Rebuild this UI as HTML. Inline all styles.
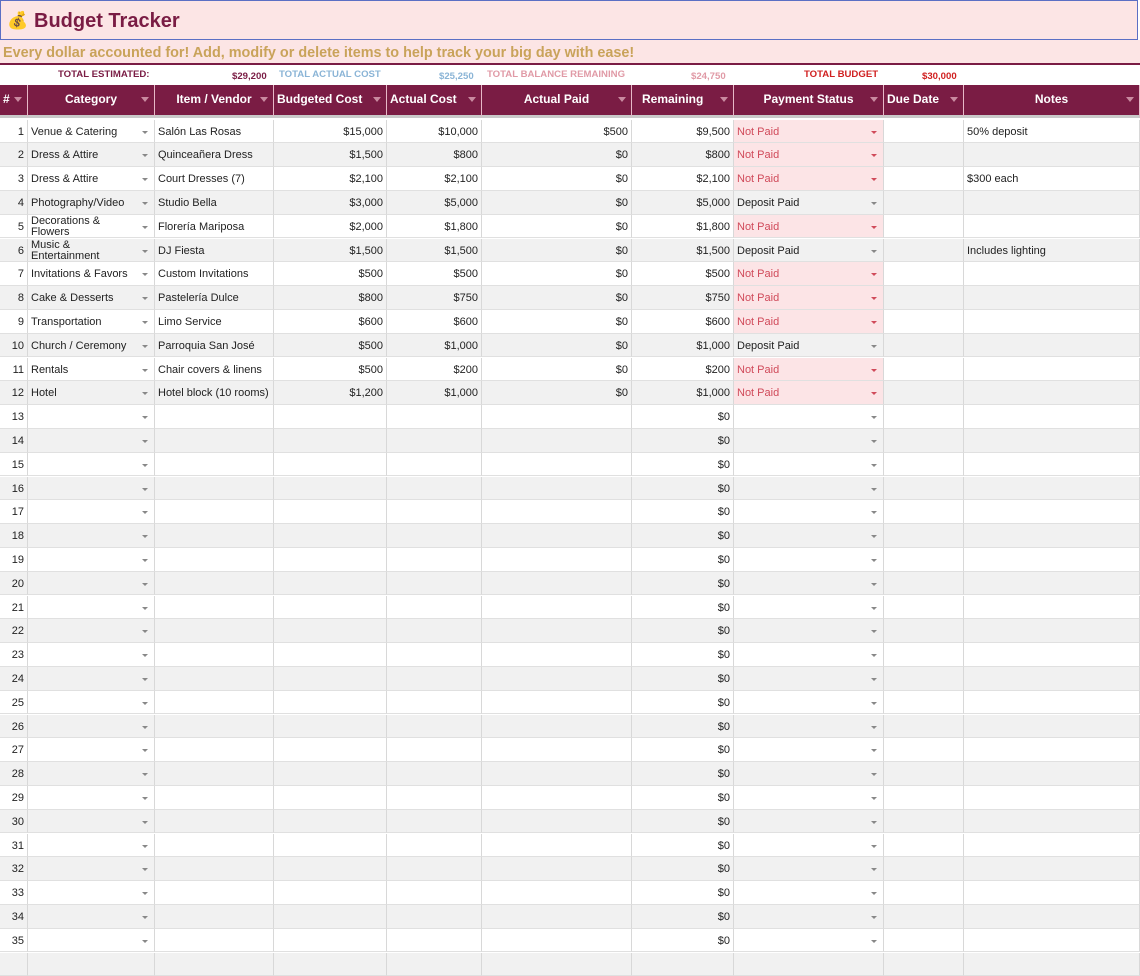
<!DOCTYPE html>
<html><head><meta charset="utf-8"><style>
*{box-sizing:border-box;margin:0;padding:0}
body{width:1140px;height:956px;overflow:hidden;background:#fff;font-family:"Liberation Sans",Arial,sans-serif;font-size:11px;color:#222;position:relative}
#title{position:absolute;left:0;top:0;width:1138px;height:40px;background:#fce5e5;border:1px solid #5b6fc4;}
#title span{position:absolute;left:33px;top:9px;font-size:20px;font-weight:bold;color:#7a1c44}
#title i{position:absolute;left:6px;top:10px;font-style:normal;font-size:17px}
#sub{position:absolute;left:0;top:40px;width:1140px;height:25px;background:#fce5e5;border-bottom:2px solid #7a1c44}
#sub span{position:absolute;left:3px;top:5px;font-size:14.4px;font-weight:bold;color:#c9a35a}
#tot{position:absolute;left:0;top:66px;width:1140px;height:18px;font-size:9.6px;font-weight:bold}
#tot div{position:absolute;top:3px}
.r{display:flex;position:absolute;left:0;width:1140px}
.r>div{flex:none;border-right:1px solid #d8d8d8;border-bottom:1px solid #e0e0e0;white-space:nowrap;overflow:hidden;padding:1px 3px 0;position:relative;line-height:23px}
.h{top:85px;height:33px;background:#7a1c44;color:#fff;font-weight:bold;font-size:12px}
.h>div{line-height:29px;text-align:center;border-right:1px solid #e7b8c7;border-bottom:3px solid #c9c9c9;padding-top:0}
.h>div:after{content:"";position:absolute;right:5px;top:12px;border:4px solid transparent;border-top:5px solid #c98aa0}
.w0{width:28px}.w1{width:127px}.w2{width:119px}.w3{width:113px}.w4{width:95px}.w5{width:150px}.w6{width:102px}.w7{width:150px}.w8{width:80px}.w9{width:176px}
.n{text-align:right}
.g{background:#f1f1f1}
.dd:after{content:"";position:absolute;right:6px;top:11px;border:3px solid transparent;border-top:3px solid #888}
.np{background:#fce4e6;color:#d04a5a}
.np:after{border-top-color:#d04a5a}
.two{line-height:11px!important;padding-top:1px!important}
</style></head><body>
<div id="title"><i>💰</i><span>Budget Tracker</span></div>
<div id="sub"><span>Every dollar accounted for! Add, modify or delete items to help track your big day with ease!</span></div>
<div id="tot">
<div style="left:58px;color:#7a1c44">TOTAL ESTIMATED:</div>
<div style="left:232px;color:#7a1c44;top:5px">$29,200</div>
<div style="left:279px;color:#8ab4d6">TOTAL ACTUAL COST</div>
<div style="left:439px;color:#8ab4d6;top:5px">$25,250</div>
<div style="left:487px;color:#e09aa6">TOTAL BALANCE REMAINING</div>
<div style="left:691px;color:#e09aa6;top:5px">$24,750</div>
<div style="left:804px;color:#d02020">TOTAL BUDGET</div>
<div style="left:922px;color:#d02020;top:5px">$30,000</div>
</div>
<div class="r h"><div class="w0" style="text-align:left">#</div><div class="w1">Category</div><div class="w2">Item / Vendor</div><div class="w3" style="text-align:left">Budgeted Cost</div><div class="w4" style="text-align:left">Actual Cost</div><div class="w5">Actual Paid</div><div class="w6" style="text-align:left;padding-left:10px">Remaining</div><div class="w7">Payment Status</div><div class="w8" style="text-align:left">Due Date</div><div class="w9">Notes</div></div>

<div class="r" style="top:119.5px;height:23.8px"><div class="w0 n">1</div><div class="w1 dd">Venue &amp; Catering</div><div class="w2">Salón Las Rosas</div><div class="w3 n">$15,000</div><div class="w4 n">$10,000</div><div class="w5 n">$500</div><div class="w6 n">$9,500</div><div class="w7 dd np">Not Paid</div><div class="w8"></div><div class="w9">50% deposit</div></div>
<div class="r g" style="top:143.3px;height:23.8px"><div class="w0 n">2</div><div class="w1 dd">Dress &amp; Attire</div><div class="w2">Quinceañera Dress</div><div class="w3 n">$1,500</div><div class="w4 n">$800</div><div class="w5 n">$0</div><div class="w6 n">$800</div><div class="w7 dd np">Not Paid</div><div class="w8"></div><div class="w9"></div></div>
<div class="r" style="top:167.1px;height:23.8px"><div class="w0 n">3</div><div class="w1 dd">Dress &amp; Attire</div><div class="w2">Court Dresses (7)</div><div class="w3 n">$2,100</div><div class="w4 n">$2,100</div><div class="w5 n">$0</div><div class="w6 n">$2,100</div><div class="w7 dd np">Not Paid</div><div class="w8"></div><div class="w9">$300 each</div></div>
<div class="r g" style="top:190.9px;height:23.8px"><div class="w0 n">4</div><div class="w1 dd">Photography/Video</div><div class="w2">Studio Bella</div><div class="w3 n">$3,000</div><div class="w4 n">$5,000</div><div class="w5 n">$0</div><div class="w6 n">$5,000</div><div class="w7 dd">Deposit Paid</div><div class="w8"></div><div class="w9"></div></div>
<div class="r" style="top:214.7px;height:23.8px"><div class="w0 n">5</div><div class="w1 dd two">Decorations &amp;<br>Flowers</div><div class="w2">Florería Mariposa</div><div class="w3 n">$2,000</div><div class="w4 n">$1,800</div><div class="w5 n">$0</div><div class="w6 n">$1,800</div><div class="w7 dd np">Not Paid</div><div class="w8"></div><div class="w9"></div></div>
<div class="r g" style="top:238.5px;height:23.8px"><div class="w0 n">6</div><div class="w1 dd two">Music &amp;<br>Entertainment</div><div class="w2">DJ Fiesta</div><div class="w3 n">$1,500</div><div class="w4 n">$1,500</div><div class="w5 n">$0</div><div class="w6 n">$1,500</div><div class="w7 dd">Deposit Paid</div><div class="w8"></div><div class="w9">Includes lighting</div></div>
<div class="r" style="top:262.3px;height:23.8px"><div class="w0 n">7</div><div class="w1 dd">Invitations &amp; Favors</div><div class="w2">Custom Invitations</div><div class="w3 n">$500</div><div class="w4 n">$500</div><div class="w5 n">$0</div><div class="w6 n">$500</div><div class="w7 dd np">Not Paid</div><div class="w8"></div><div class="w9"></div></div>
<div class="r g" style="top:286.1px;height:23.8px"><div class="w0 n">8</div><div class="w1 dd">Cake &amp; Desserts</div><div class="w2">Pastelería Dulce</div><div class="w3 n">$800</div><div class="w4 n">$750</div><div class="w5 n">$0</div><div class="w6 n">$750</div><div class="w7 dd np">Not Paid</div><div class="w8"></div><div class="w9"></div></div>
<div class="r" style="top:309.9px;height:23.8px"><div class="w0 n">9</div><div class="w1 dd">Transportation</div><div class="w2">Limo Service</div><div class="w3 n">$600</div><div class="w4 n">$600</div><div class="w5 n">$0</div><div class="w6 n">$600</div><div class="w7 dd np">Not Paid</div><div class="w8"></div><div class="w9"></div></div>
<div class="r g" style="top:333.7px;height:23.8px"><div class="w0 n">10</div><div class="w1 dd">Church / Ceremony</div><div class="w2">Parroquia San José</div><div class="w3 n">$500</div><div class="w4 n">$1,000</div><div class="w5 n">$0</div><div class="w6 n">$1,000</div><div class="w7 dd">Deposit Paid</div><div class="w8"></div><div class="w9"></div></div>
<div class="r" style="top:357.5px;height:23.8px"><div class="w0 n">11</div><div class="w1 dd">Rentals</div><div class="w2">Chair covers &amp; linens</div><div class="w3 n">$500</div><div class="w4 n">$200</div><div class="w5 n">$0</div><div class="w6 n">$200</div><div class="w7 dd np">Not Paid</div><div class="w8"></div><div class="w9"></div></div>
<div class="r g" style="top:381.3px;height:23.8px"><div class="w0 n">12</div><div class="w1 dd">Hotel</div><div class="w2">Hotel block (10 rooms)</div><div class="w3 n">$1,200</div><div class="w4 n">$1,000</div><div class="w5 n">$0</div><div class="w6 n">$1,000</div><div class="w7 dd np">Not Paid</div><div class="w8"></div><div class="w9"></div></div>
<div class="r" style="top:405.1px;height:23.8px"><div class="w0 n">13</div><div class="w1 dd"></div><div class="w2"></div><div class="w3"></div><div class="w4"></div><div class="w5"></div><div class="w6 n">$0</div><div class="w7 dd"></div><div class="w8"></div><div class="w9"></div></div>
<div class="r g" style="top:428.9px;height:23.8px"><div class="w0 n">14</div><div class="w1 dd"></div><div class="w2"></div><div class="w3"></div><div class="w4"></div><div class="w5"></div><div class="w6 n">$0</div><div class="w7 dd"></div><div class="w8"></div><div class="w9"></div></div>
<div class="r" style="top:452.7px;height:23.8px"><div class="w0 n">15</div><div class="w1 dd"></div><div class="w2"></div><div class="w3"></div><div class="w4"></div><div class="w5"></div><div class="w6 n">$0</div><div class="w7 dd"></div><div class="w8"></div><div class="w9"></div></div>
<div class="r g" style="top:476.5px;height:23.8px"><div class="w0 n">16</div><div class="w1 dd"></div><div class="w2"></div><div class="w3"></div><div class="w4"></div><div class="w5"></div><div class="w6 n">$0</div><div class="w7 dd"></div><div class="w8"></div><div class="w9"></div></div>
<div class="r" style="top:500.3px;height:23.8px"><div class="w0 n">17</div><div class="w1 dd"></div><div class="w2"></div><div class="w3"></div><div class="w4"></div><div class="w5"></div><div class="w6 n">$0</div><div class="w7 dd"></div><div class="w8"></div><div class="w9"></div></div>
<div class="r g" style="top:524.1px;height:23.8px"><div class="w0 n">18</div><div class="w1 dd"></div><div class="w2"></div><div class="w3"></div><div class="w4"></div><div class="w5"></div><div class="w6 n">$0</div><div class="w7 dd"></div><div class="w8"></div><div class="w9"></div></div>
<div class="r" style="top:547.9px;height:23.8px"><div class="w0 n">19</div><div class="w1 dd"></div><div class="w2"></div><div class="w3"></div><div class="w4"></div><div class="w5"></div><div class="w6 n">$0</div><div class="w7 dd"></div><div class="w8"></div><div class="w9"></div></div>
<div class="r g" style="top:571.7px;height:23.8px"><div class="w0 n">20</div><div class="w1 dd"></div><div class="w2"></div><div class="w3"></div><div class="w4"></div><div class="w5"></div><div class="w6 n">$0</div><div class="w7 dd"></div><div class="w8"></div><div class="w9"></div></div>
<div class="r" style="top:595.5px;height:23.8px"><div class="w0 n">21</div><div class="w1 dd"></div><div class="w2"></div><div class="w3"></div><div class="w4"></div><div class="w5"></div><div class="w6 n">$0</div><div class="w7 dd"></div><div class="w8"></div><div class="w9"></div></div>
<div class="r g" style="top:619.3px;height:23.8px"><div class="w0 n">22</div><div class="w1 dd"></div><div class="w2"></div><div class="w3"></div><div class="w4"></div><div class="w5"></div><div class="w6 n">$0</div><div class="w7 dd"></div><div class="w8"></div><div class="w9"></div></div>
<div class="r" style="top:643.1px;height:23.8px"><div class="w0 n">23</div><div class="w1 dd"></div><div class="w2"></div><div class="w3"></div><div class="w4"></div><div class="w5"></div><div class="w6 n">$0</div><div class="w7 dd"></div><div class="w8"></div><div class="w9"></div></div>
<div class="r g" style="top:666.9px;height:23.8px"><div class="w0 n">24</div><div class="w1 dd"></div><div class="w2"></div><div class="w3"></div><div class="w4"></div><div class="w5"></div><div class="w6 n">$0</div><div class="w7 dd"></div><div class="w8"></div><div class="w9"></div></div>
<div class="r" style="top:690.7px;height:23.8px"><div class="w0 n">25</div><div class="w1 dd"></div><div class="w2"></div><div class="w3"></div><div class="w4"></div><div class="w5"></div><div class="w6 n">$0</div><div class="w7 dd"></div><div class="w8"></div><div class="w9"></div></div>
<div class="r g" style="top:714.5px;height:23.8px"><div class="w0 n">26</div><div class="w1 dd"></div><div class="w2"></div><div class="w3"></div><div class="w4"></div><div class="w5"></div><div class="w6 n">$0</div><div class="w7 dd"></div><div class="w8"></div><div class="w9"></div></div>
<div class="r" style="top:738.3px;height:23.8px"><div class="w0 n">27</div><div class="w1 dd"></div><div class="w2"></div><div class="w3"></div><div class="w4"></div><div class="w5"></div><div class="w6 n">$0</div><div class="w7 dd"></div><div class="w8"></div><div class="w9"></div></div>
<div class="r g" style="top:762.1px;height:23.8px"><div class="w0 n">28</div><div class="w1 dd"></div><div class="w2"></div><div class="w3"></div><div class="w4"></div><div class="w5"></div><div class="w6 n">$0</div><div class="w7 dd"></div><div class="w8"></div><div class="w9"></div></div>
<div class="r" style="top:785.9px;height:23.8px"><div class="w0 n">29</div><div class="w1 dd"></div><div class="w2"></div><div class="w3"></div><div class="w4"></div><div class="w5"></div><div class="w6 n">$0</div><div class="w7 dd"></div><div class="w8"></div><div class="w9"></div></div>
<div class="r g" style="top:809.7px;height:23.8px"><div class="w0 n">30</div><div class="w1 dd"></div><div class="w2"></div><div class="w3"></div><div class="w4"></div><div class="w5"></div><div class="w6 n">$0</div><div class="w7 dd"></div><div class="w8"></div><div class="w9"></div></div>
<div class="r" style="top:833.5px;height:23.8px"><div class="w0 n">31</div><div class="w1 dd"></div><div class="w2"></div><div class="w3"></div><div class="w4"></div><div class="w5"></div><div class="w6 n">$0</div><div class="w7 dd"></div><div class="w8"></div><div class="w9"></div></div>
<div class="r g" style="top:857.3px;height:23.8px"><div class="w0 n">32</div><div class="w1 dd"></div><div class="w2"></div><div class="w3"></div><div class="w4"></div><div class="w5"></div><div class="w6 n">$0</div><div class="w7 dd"></div><div class="w8"></div><div class="w9"></div></div>
<div class="r" style="top:881.1px;height:23.8px"><div class="w0 n">33</div><div class="w1 dd"></div><div class="w2"></div><div class="w3"></div><div class="w4"></div><div class="w5"></div><div class="w6 n">$0</div><div class="w7 dd"></div><div class="w8"></div><div class="w9"></div></div>
<div class="r g" style="top:904.9px;height:23.8px"><div class="w0 n">34</div><div class="w1 dd"></div><div class="w2"></div><div class="w3"></div><div class="w4"></div><div class="w5"></div><div class="w6 n">$0</div><div class="w7 dd"></div><div class="w8"></div><div class="w9"></div></div>
<div class="r" style="top:928.7px;height:23.8px"><div class="w0 n">35</div><div class="w1 dd"></div><div class="w2"></div><div class="w3"></div><div class="w4"></div><div class="w5"></div><div class="w6 n">$0</div><div class="w7 dd"></div><div class="w8"></div><div class="w9"></div></div>
<div class="r g" style="top:952.5px;height:23.8px"><div class="w0"></div><div class="w1"></div><div class="w2"></div><div class="w3"></div><div class="w4"></div><div class="w5"></div><div class="w6"></div><div class="w7"></div><div class="w8"></div><div class="w9"></div></div>
</body></html>
